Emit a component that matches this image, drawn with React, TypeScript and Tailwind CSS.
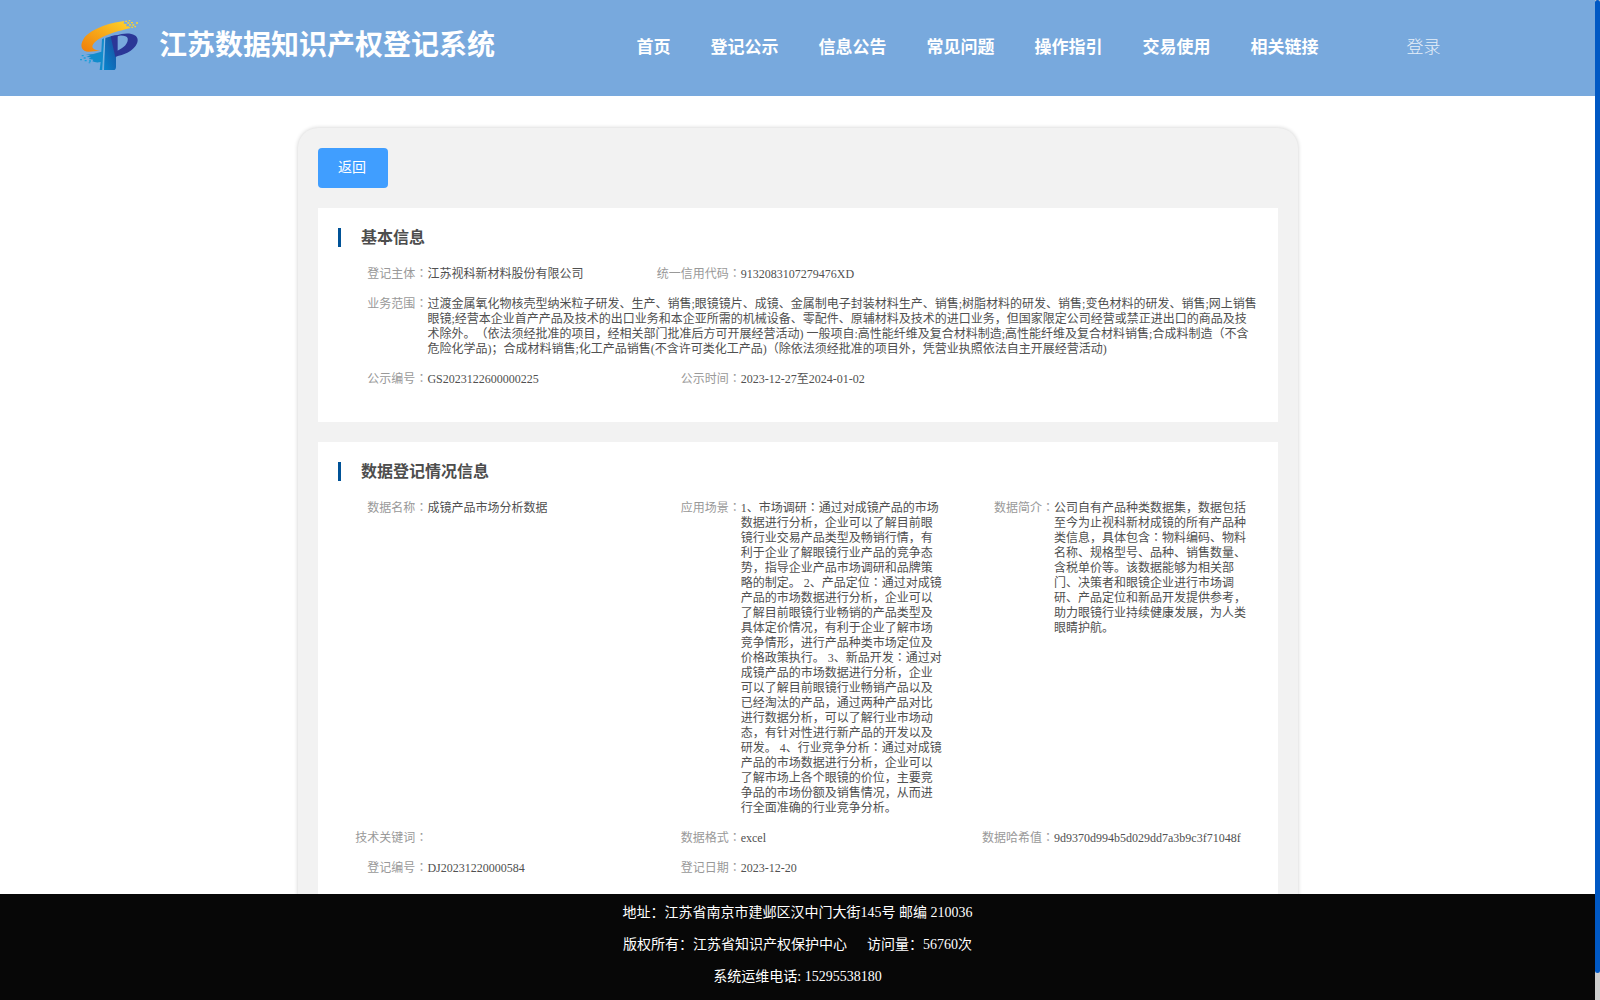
import { Fragment } from 'react';

const navItems = ['首页', '登记公示', '信息公告', '常见问题', '操作指引', '交易使用', '相关链接'];

const businessScope = [
  '过渡金属氧化物核壳型纳米粒子研发、生产、销售;眼镜镜片、成镜、金属制电子封装材料生产、销售;树脂材料的研发、销售;变色材料的研发、销售;网上销售',
  '眼镜;经营本企业首产产品及技术的出口业务和本企亚所需的机械设备、零配件、原辅材料及技术的进口业务，但国家限定公司经营或禁正进出口的商品及技',
  '术除外。（依法须经批准的项目，经相关部门批准后方可开展经营活动) 一般项自:高性能纤维及复合材料制造;高性能纤维及复合材料销售;合成料制造（不含',
  '危险化学品)；合成材料销售;化工产品销售(不含许可类化工产品)（除依法须经批准的项目外，凭营业执照依法自主开展经营活动)',
];

const scenario = [
  '1、市场调研：通过对成镜产品的市场',
  '数据进行分析，企业可以了解目前眼',
  '镜行业交易产品类型及畅销行情，有',
  '利于企业了解眼镜行业产品的竞争态',
  '势，指导企业产品市场调研和品牌策',
  '略的制定。 2、产品定位：通过对成镜',
  '产品的市场数据进行分析，企业可以',
  '了解目前眼镜行业畅销的产品类型及',
  '具体定价情况，有利于企业了解市场',
  '竞争情形，进行产品种类市场定位及',
  '价格政策执行。 3、新品开发：通过对',
  '成镜产品的市场数据进行分析，企业',
  '可以了解目前眼镜行业畅销产品以及',
  '已经淘汰的产品，通过两种产品对比',
  '进行数据分析，可以了解行业市场动',
  '态，有针对性进行新产品的开发以及',
  '研发。 4、行业竞争分析：通过对成镜',
  '产品的市场数据进行分析，企业可以',
  '了解市场上各个眼镜的价位，主要竞',
  '争品的市场份额及销售情况，从而进',
  '行全面准确的行业竞争分析。',
];

const summary = [
  '公司自有产品种类数据集，数据包括',
  '至今为止视科新材成镜的所有产品种',
  '类信息，具体包含：物料编码、物料',
  '名称、规格型号、品种、销售数量、',
  '含税单价等。该数据能够为相关部',
  '门、决策者和眼镜企业进行市场调',
  '研、产品定位和新品开发提供参考，',
  '助力眼镜行业持续健康发展，为人类',
  '眼睛护航。',
];

function Logo() {
  return (
    <svg viewBox="0 0 240 210" className="h-[70px] w-20 shrink-0">
      <defs>
        <linearGradient id="swoosh" x1="0" y1="1" x2="1" y2="0">
          <stop offset="0" stopColor="#ef7d0a" />
          <stop offset="1" stopColor="#ffd42a" />
        </linearGradient>
        <linearGradient id="stem" x1="0" y1="1" x2="1" y2="0">
          <stop offset="0" stopColor="#0785cd" />
          <stop offset="1" stopColor="#1b4a9c" />
        </linearGradient>
      </defs>
      <path
        d="M163 33C115 38 58 60 41 86C27 108 36 125 56 125L91 122C60 119 60 104 88 86C112 72 148 62 182 54L176 49L168 49L170 42L161 41Z"
        fill="url(#swoosh)"
      />
      <path d="M166 32h5v4h-5zM176 30h5v4h-5zM172 37h6v4h-6zM183 36h6v4h-6zM177 43h6v4h-6zM187 43h6v4h-6zM198 37h6v4h-6zM193 48h5v4h-5zM184 50h5v4h-5z" fill="#ffd42a" />
      <path
        d="M138 77C168 65 203 69 203 90C203 114 169 135 138 139V124C162 115 176 99 173 85C171 77 158 75 143 77Z"
        fill="#2b3797"
      />
      <path d="M106 84Q123 77 143 77Q138 82 138 95V170Q138 180 130 180H102Z" fill="url(#stem)" />
      <path d="M122 79Q136 74 152 75L143 79V138L136 141Z" fill="#2b3797" />
      <path d="M103 84L99 180H89L92 156Q78 159 67 154L70 149L56 147L63 142L49 141L61 136L47 134Q73 133 94 125L96 88Z" fill="#128ccc" />
      <path d="M104 84L98 180" stroke="#9cc8ec" strokeWidth="2" />
      <path d="M35 135h6v4h-6zM41 142h6v4h-6zM30 147h6v4h-6zM44 150h6v4h-6zM57 151h6v4h-6zM56 157h5v3h-5z" fill="#16a0dc" />
    </svg>
  );
}

// full-width colons sit in the middle of their box
function Text({ children }: { children: string }) {
  return (
    <>
      {children.split(/(：)/).map((part, i) =>
        part === '：' ? (
          <span key={i} className="font-['Noto_Sans_CJK_TC',sans-serif] leading-[0]">{part}</span>
        ) : (
          <Fragment key={i}>{part}</Fragment>
        )
      )}
    </>
  );
}

function Field({ label, lines, wide }: { label: string; lines: string[]; wide?: boolean }) {
  return (
    <div className={wide ? 'col-span-3 flex' : 'flex'}>
      <div className="h-[15px] w-[89.4px] shrink-0 text-right whitespace-nowrap text-[#999]">
        <Text>{`${label}：`}</Text>
      </div>
      <div className="whitespace-nowrap text-[#505050]">
        {lines.map((line, i) => (
          <div key={i} className="h-[15px]"><Text>{line}</Text></div>
        ))}
      </div>
    </div>
  );
}

function Section({ title, className, children }: { title: string; className: string; children: React.ReactNode }) {
  return (
    <section className={`bg-white pt-5 pl-5 ${className}`}>
      <h2 className="h-[19px] border-l-3 border-[#005297] pl-5 text-base leading-5 font-bold text-[#4d4d4d]">
        {title}
      </h2>
      <div className="mt-5 grid grid-cols-3 gap-y-[15px] text-xs leading-[15px]">{children}</div>
    </section>
  );
}

export default function App() {
  return (
    <div className="flex h-[1000px] w-[1600px] overflow-hidden bg-white font-['Liberation_Serif','Noto_Sans_CJK_SC',serif] [text-spacing-trim:space-all]">
      <div className="flex w-[1595px] flex-col">
        <header className="flex h-24 shrink-0 items-start bg-[#78a9dd] pl-[70px] text-white">
          <div className="pt-2.5">
            <Logo />
          </div>
          <h1 className="ml-[9px] w-[477.5px] pt-[26px] text-[28px] leading-10 font-bold whitespace-nowrap">江苏数据知识产权登记系统</h1>
          <nav className="flex gap-10 pt-9 text-[17px] leading-6 font-bold whitespace-nowrap">
            {navItems.map((item) => (
              <a key={item} href="#">{item}</a>
            ))}
          </nav>
          <a href="#" className="ml-[88px] pt-9 text-[17px] leading-6 font-light text-[#e6eff9]">登录</a>
        </header>

        <main className="min-h-0 flex-1 overflow-hidden pt-8">
          <div className="ml-[298px] h-[1000px] w-[1000px] rounded-[20px] bg-[#f2f2f2] p-5 shadow-[0_0_4px_rgba(0,0,0,0.2)]">
            <button className="mb-5 block h-10 w-[70px] rounded bg-[#409eff] pr-0.5 text-sm leading-10 text-white">返回</button>
            <Section title="基本信息" className="mb-5 h-[214px]">
              <Field label="登记主体" lines={['江苏视科新材料股份有限公司']} />
              <Field label="统一信用代码" lines={['9132083107279476XD']} />
              <div />
              <Field label="业务范围" lines={businessScope} wide />
              <Field label="公示编号" lines={['GS2023122600000225']} />
              <Field label="公示时间" lines={['2023-12-27至2024-01-02']} />
            </Section>
            <Section title="数据登记情况信息" className="h-[600px]">
              <Field label="数据名称" lines={['成镜产品市场分析数据']} />
              <Field label="应用场景" lines={scenario} />
              <Field label="数据简介" lines={summary} />
              <Field label="技术关键词" lines={['']} />
              <Field label="数据格式" lines={['excel']} />
              <Field label="数据哈希值" lines={['9d9370d994b5d029dd7a3b9c3f71048f']} />
              <Field label="登记编号" lines={['DJ20231220000584']} />
              <Field label="登记日期" lines={['2023-12-20']} />
            </Section>
          </div>
        </main>

        <footer className="h-[106px] shrink-0 bg-[#070707] pt-[3px] text-center text-sm leading-8 text-white">
          <p>地址：江苏省南京市建邺区汉中门大街145号 邮编 210036</p>
          <p>
            版权所有：江苏省知识产权保护中心<span className="ml-5">访问量：56760次</span>
          </p>
          <p>系统运维电话: 15295538180</p>
        </footer>
      </div>
      <div className="w-[5px] bg-[#cdcdcd]">
        <div className="h-[973px] rounded-[3px] bg-[#0058c4]" />
      </div>
    </div>
  );
}
